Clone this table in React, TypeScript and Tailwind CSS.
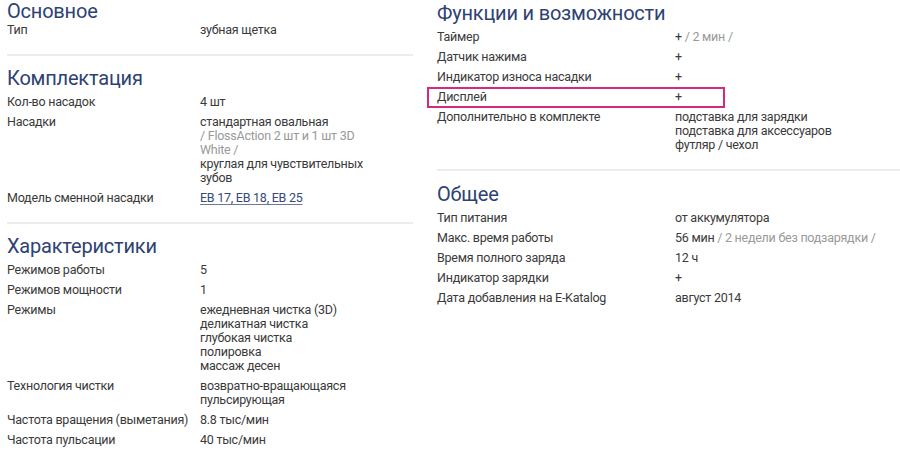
type Part = { text: string; muted?: boolean; link?: boolean };
type Row = { label: string; lines: (string | Part[])[]; mark?: boolean };
type Group = { title: string; rows: Row[]; last?: boolean };

const left: Group[] = [
  { title: "Основное", rows: [{ label: "Тип", lines: ["зубная щетка"] }] },
  {
    title: "Комплектация",
    rows: [
      { label: "Кол-во насадок", lines: ["4 шт"] },
      {
        label: "Насадки",
        lines: [
          "стандартная овальная",
          [{ text: "/ FlossAction 2 шт и 1 шт 3D", muted: true }],
          [{ text: "White /", muted: true }],
          "круглая для чувствительных",
          "зубов",
        ],
      },
      {
        label: "Модель сменной насадки",
        lines: [[{ text: "EB 17, EB 18, EB 25", link: true }]],
      },
    ],
  },
  {
    title: "Характеристики",
    last: true,
    rows: [
      { label: "Режимов работы", lines: ["5"] },
      { label: "Режимов мощности", lines: ["1"] },
      {
        label: "Режимы",
        lines: [
          "ежедневная чистка (3D)",
          "деликатная чистка",
          "глубокая чистка",
          "полировка",
          "массаж десен",
        ],
      },
      { label: "Технология чистки", lines: ["возвратно-вращающаяся", "пульсирующая"] },
      { label: "Частота вращения (выметания)", lines: ["8.8 тыс/мин"] },
      { label: "Частота пульсации", lines: ["40 тыс/мин"] },
    ],
  },
];

const right: Group[] = [
  {
    title: "Функции и возможности",
    rows: [
      { label: "Таймер", lines: [[{ text: "+ " }, { text: "/ 2 мин /", muted: true }]] },
      { label: "Датчик нажима", lines: ["+"] },
      { label: "Индикатор износа насадки", lines: ["+"] },
      { label: "Дисплей", lines: ["+"], mark: true },
      {
        label: "Дополнительно в комплекте",
        lines: ["подставка для зарядки", "подставка для аксессуаров", "футляр / чехол"],
      },
    ],
  },
  {
    title: "Общее",
    last: true,
    rows: [
      { label: "Тип питания", lines: ["от аккумулятора"] },
      {
        label: "Макс. время работы",
        lines: [[{ text: "56 мин " }, { text: "/ 2 недели без подзарядки /", muted: true }]],
      },
      { label: "Время полного заряда", lines: ["12 ч"] },
      { label: "Индикатор зарядки", lines: ["+"] },
      { label: "Дата добавления на E-Katalog", lines: ["август 2014"] },
    ],
  },
];

function Line({ line }: { line: string | Part[] }) {
  if (typeof line === "string") return <div>{line}</div>;
  return (
    <div>
      {line.map((p, i) =>
        p.link ? (
          <a key={i} className="text-[#34497a] underline underline-offset-2 decoration-[#6b7a9c]">
            {p.text}
          </a>
        ) : (
          <span key={i} className={p.muted ? "text-[#999]" : ""}>
            {p.text}
          </span>
        )
      )}
    </div>
  );
}

function Section({
  group,
  labelW,
  top,
  gap,
}: {
  group: Group;
  labelW: string;
  top: string;
  gap: string;
}) {
  return (
    <div className={top}>
      <h2 className={`text-[20px] leading-[24px] tracking-[-0.2px] text-[#2d4272] ${gap}`}>
        {group.title}
      </h2>
      {group.rows.map((r) => (
        <div
          key={r.label}
          className="relative flex py-[3px] text-[12.5px] leading-[14px] tracking-[-0.25px] text-[#3a3a3a]"
        >
          <div className={`${labelW} whitespace-nowrap`}>{r.label}</div>
          <div className="flex-1">
            {r.lines.map((l, i) => (
              <Line key={i} line={l} />
            ))}
          </div>
          {r.mark && (
            <div className="absolute left-[-10px] top-0 w-[298px] h-[21px] border-2 border-[#d42a7e]" />
          )}
        </div>
      ))}
      {!group.last && <div className="mt-[14px] h-[2px] bg-[#ececec]" />}
    </div>
  );
}

export default function App() {
  return (
    <div
      className="w-[900px] h-[466px] overflow-hidden bg-white flex"
      style={{ fontFamily: "Roboto, 'Liberation Sans', sans-serif" }}
    >
      <div className="ml-[7px] w-[406px] shrink-0 mt-[-1px]">
        {left.map((g, i) => (
          <Section
            key={g.title}
            group={g}
            labelW="w-[193px] shrink-0"
            top={i === 0 ? "" : "pt-[10px]"}
            gap={i === 0 ? "mb-[-3px]" : "mb-[2px]"}
          />
        ))}
      </div>
      <div className="ml-[24px] w-[500px] shrink-0 mt-[1px]">
        {right.map((g, i) => (
          <Section
            key={g.title}
            group={g}
            labelW="w-[238px] shrink-0"
            top={i === 0 ? "" : "pt-[11px]"}
            gap="mb-[2px]"
          />
        ))}
      </div>
    </div>
  );
}
